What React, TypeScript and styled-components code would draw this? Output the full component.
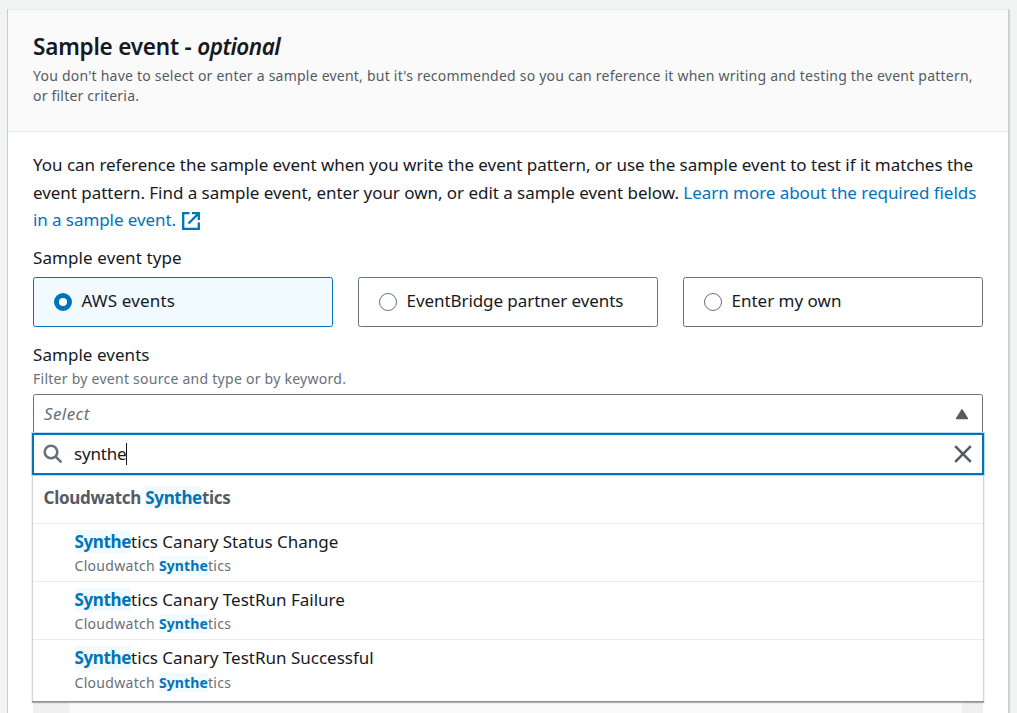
import React from "react";
import styled, { createGlobalStyle } from "styled-components";

const GlobalStyle = createGlobalStyle`
  *, *::before, *::after { box-sizing: border-box; }
  html, body { margin: 0; height: 100%; overflow: hidden; }
  body {
    background: #f2f3f3;
    color: #16191f;
    font-family: "Noto Sans", "Open Sans", sans-serif;
    font-size: 17px;
    line-height: 27.5px;
  }
`;

const Page = styled.main`
  height: 713px;
  padding: 9px 9px 0 8px;
  overflow: hidden;
`;

const Panel = styled.section`
  height: 760px;
  background: #fff;
  border-top: 1px solid #eaeded;
  box-shadow: -1px 0 0 #c9cdcf, 1px 0 0 #c9cdcf, 2px 1px 1px rgba(0, 28, 36, 0.12);
`;

const PanelHeader = styled.header`
  height: 122px;
  padding: 23px 25px 0;
  background: #fafafa;
  border-bottom: 1px solid #eaeded;
`;

const Line = styled.span<{ $track?: number }>`
  display: block;
  white-space: nowrap;
  letter-spacing: ${(p) => p.$track ?? 0}px;
`;

const Title = styled.h2`
  margin: 0 0 5px;
  font-size: 22.5px;
  font-weight: 600;
  line-height: 28px;

  i {
    letter-spacing: -0.5px;
  }
`;

const Description = styled.p`
  margin: 0;
  color: #545b64;
  font-size: 14px;
  line-height: 20px;
`;

const PanelBody = styled.div`
  padding: 19px 25px 0;
`;

const Intro = styled.p`
  margin: 0 0 10px;
  height: 83px;
`;

const Link = styled.a`
  color: #0073bb;
  text-decoration: none;
`;

const LinkIcon = styled.svg`
  width: 20px;
  height: 20px;
  margin-left: 5px;
  vertical-align: -5px;
`;

const Label = styled.div`
  height: 28px;
`;

const Tiles = styled.div`
  display: grid;
  grid-template-columns: repeat(3, 300px);
  gap: 25px;
  margin: 5px 0 14px;
`;

const Tile = styled.label<{ $selected?: boolean }>`
  display: flex;
  align-items: center;
  gap: 9.5px;
  height: 50px;
  padding: 0 20px 3px;
  border: 1px solid ${(p) => (p.$selected ? "#0073bb" : "#687078")};
  border-radius: 2.5px;
  background: ${(p) => (p.$selected ? "#f1faff" : "#fff")};
`;

const Radio = styled.span<{ $selected?: boolean }>`
  width: 18px;
  height: 18px;
  margin-top: 2px;
  border: ${(p) => (p.$selected ? "5.5px solid #0073bb" : "1px solid #687078")};
  border-radius: 50%;
  background: #fff;
`;

const Hint = styled.div`
  height: 20px;
  margin-bottom: 5px;
  color: #687078;
  font-size: 14px;
  line-height: 20px;
`;

const SelectWrap = styled.div`
  position: relative;
`;

const Trigger = styled.div`
  display: flex;
  align-items: center;
  justify-content: space-between;
  height: 40px;
  padding: 0 13px 0 10px;
  border: 1px solid #687078;
  border-radius: 2.5px 2.5px 0 0;
  color: #687078;
  font-style: italic;
`;

const Dropdown = styled.div`
  position: absolute;
  top: 39px;
  left: -1px;
  width: 952px;
  background: #fff;
`;

const SearchBox = styled.div`
  display: flex;
  align-items: center;
  height: 42px;
  padding: 0 10px 0 9px;
  border: 2px solid #0073bb;
  box-shadow: 0 0 0 1px #b8dcf0;
  position: relative;
`;

const Query = styled.span`
  flex: 1;
  display: flex;
  align-items: center;
  margin-left: 11px;
`;

const Caret = styled.span`
  width: 1px;
  height: 22px;
  margin-left: -0.5px;
  background: #16191f;
`;

const Options = styled.ul`
  margin: 0;
  padding: 0;
  list-style: none;
  border: solid #d0d4d4;
  border-width: 0 1px;
  box-shadow: 0 1px 0 #879196, 0 2px 1px rgba(0, 28, 36, 0.3);
`;

const Group = styled.li`
  height: 48px;
  padding: 9px 10px 0 10.5px;
  color: #545b64;
  font-weight: 700;
`;

const Option = styled.li<{ $last?: boolean }>`
  height: ${(p) => (p.$last ? 62 : 58)}px;
  padding: 4px 0 0 41.5px;
  border-top: 1px solid #eaeded;
`;

const OptionSource = styled.div<{ $shift?: boolean }>`
  margin-top: ${(p) => (p.$shift ? 1 : 0)}px;
  color: #687078;
  font-size: 14px;
  line-height: 20px;
`;

const Match = styled.mark<{ $track: number }>`
  background: #f1faff;
  color: #0073bb;
  font-weight: 700;
  letter-spacing: ${(p) => p.$track}px;
`;

const Editor = styled.div`
  height: 80px;
  margin-top: 260px;
  background: #fafafa;
  border: solid #f0f0f0;
  border-width: 0 21px 0 36px;
`;

const tiles = [
  { text: "AWS events", track: 0.15, selected: true },
  { text: "EventBridge partner events", track: -0.07 },
  { text: "Enter my own", track: 0 },
];

const options = ["tics Canary Status Change", "tics Canary TestRun Failure", "tics Canary TestRun Successful"];

export default function App() {
  return (
    <Page>
      <GlobalStyle />
      <Panel>
        <PanelHeader>
          <Title>
            <Line $track={-0.2}>
              Sample event - <i>optional</i>
            </Line>
          </Title>
          <Description>
            <Line $track={0.225}>
              You don't have to select or enter a sample event, but it's recommended so you can reference it when writing and testing the event pattern,
            </Line>
            <Line $track={0.2}>or filter criteria.</Line>
          </Description>
        </PanelHeader>
        <PanelBody>
          <Intro>
            <Line $track={-0.025}>
              You can reference the sample event when you write the event pattern, or use the sample event to test if it matches the
            </Line>
            <Line $track={-0.04}>
              event pattern. Find a sample event, enter your own, or edit a sample event below.{" "}
              <Link>Learn more about the required fields</Link>
            </Line>
            <Line $track={-0.08}>
              <Link>
                in a sample event.
                <LinkIcon viewBox="0 0 20 20" fill="none" stroke="currentColor" strokeWidth="2.3">
                  <path d="M8.5 2.2H2.2v15.6h15.6V11.5M11 2.2h6.8V9M17.5 2.5 7.5 12.5" />
                </LinkIcon>
              </Link>
            </Line>
          </Intro>
          <Label>
            <Line $track={0.1}>Sample event type</Line>
          </Label>
          <Tiles>
            {tiles.map((t) => (
              <Tile key={t.text} $selected={t.selected}>
                <Radio $selected={t.selected} />
                <Line $track={t.track}>{t.text}</Line>
              </Tile>
            ))}
          </Tiles>
          <Label>
            <Line $track={0.05}>Sample events</Line>
          </Label>
          <Hint>
            <Line $track={0.26}>Filter by event source and type or by keyword.</Line>
          </Hint>
          <SelectWrap>
            <Trigger>
              <Line $track={0.4}>Select</Line>
              <svg width="14" height="12" viewBox="0 0 14 12">
                <path d="M7 1.8 12.5 10.5h-11Z" fill="#545b64" stroke="#545b64" strokeWidth="1.4" strokeLinejoin="round" />
              </svg>
            </Trigger>
            <Dropdown>
              <SearchBox>
                <svg width="20" height="20" viewBox="0 0 20 20" fill="none" stroke="#687078" strokeWidth="2.6">
                  <circle cx="8" cy="8" r="6.3" />
                  <path d="m12.4 12.4 6 6" />
                </svg>
                <Query>
                  <Line $track={-0.2}>synthe</Line>
                  <Caret />
                </Query>
                <svg width="18" height="18" viewBox="0 0 18 18" fill="none" stroke="#545b64" strokeWidth="2.6">
                  <path d="M1.2 1.2l15.6 15.6M16.8 1.2 1.2 16.8" />
                </svg>
              </SearchBox>
              <Options>
                <Group>
                  <Line $track={-0.27}>
                    Cloudwatch <Match $track={-0.35}>Synthe</Match>tics
                  </Line>
                </Group>
                {options.map((rest, i) => (
                  <Option key={rest} $last={i === options.length - 1}>
                    <Line $track={0}>
                      <Match $track={-0.35}>Synthe</Match>
                      {rest}
                    </Line>
                    <OptionSource $shift={i === options.length - 1}>
                      <Line $track={0.3}>
                        Cloudwatch <Match $track={0.1}>Synthe</Match>tics
                      </Line>
                    </OptionSource>
                  </Option>
                ))}
              </Options>
            </Dropdown>
          </SelectWrap>
          <Editor />
        </PanelBody>
      </Panel>
    </Page>
  );
}
